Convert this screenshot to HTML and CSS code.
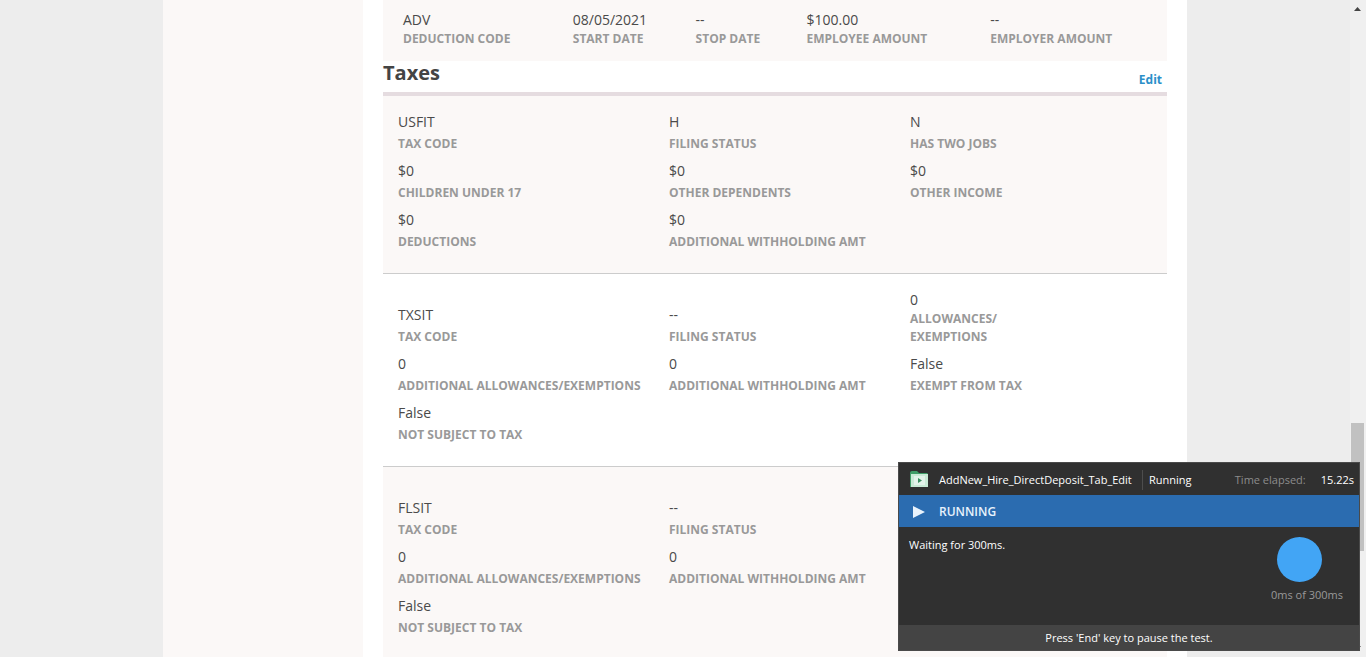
FILE: index.html
```html
<!DOCTYPE html>
<html lang="en">
<head>
<meta charset="utf-8">
<title>Employee – Taxes</title>
<link rel="stylesheet" href="styles.css">
</head>
<body>
<div class="window">
  <div class="viewport">
    <div class="page">
      <aside class="sidebar"></aside>
      <main class="main">
        <dl class="deduction">
          <div class="field"><dd>ADV</dd><dt>Deduction Code</dt></div>
          <div class="field"><dd>08/05/2021</dd><dt>Start Date</dt></div>
          <div class="field"><dd>--</dd><dt>Stop Date</dt></div>
          <div class="field"><dd>$100.00</dd><dt>Employee Amount</dt></div>
          <div class="field"><dd>--</dd><dt>Employer Amount</dt></div>
        </dl>
        <section>
          <header class="section-head">
            <h2>Taxes</h2>
            <a class="edit" href="#">Edit</a>
          </header>
          <dl class="tax shaded">
            <div class="field"><dd>USFIT</dd><dt>Tax Code</dt></div>
            <div class="field"><dd>H</dd><dt>Filing Status</dt></div>
            <div class="field"><dd>N</dd><dt>Has Two Jobs</dt></div>
            <div class="field"><dd>$0</dd><dt>Children Under 17</dt></div>
            <div class="field"><dd>$0</dd><dt>Other Dependents</dt></div>
            <div class="field"><dd>$0</dd><dt>Other Income</dt></div>
            <div class="field"><dd>$0</dd><dt>Deductions</dt></div>
            <div class="field"><dd>$0</dd><dt>Additional Withholding Amt</dt></div>
          </dl>
          <dl class="tax state-tax">
            <div class="field"><dd>TXSIT</dd><dt>Tax Code</dt></div>
            <div class="field"><dd>--</dd><dt>Filing Status</dt></div>
            <div class="field tight"><dd>0</dd><dt>Allowances/<br>Exemptions</dt></div>
            <div class="field"><dd>0</dd><dt>Additional Allowances/Exemptions</dt></div>
            <div class="field"><dd>0</dd><dt>Additional Withholding Amt</dt></div>
            <div class="field"><dd>False</dd><dt>Exempt From Tax</dt></div>
            <div class="field"><dd>False</dd><dt>Not Subject To Tax</dt></div>
          </dl>
          <dl class="tax state-tax shaded">
            <div class="field"><dd>FLSIT</dd><dt>Tax Code</dt></div>
            <div class="field"><dd>--</dd><dt>Filing Status</dt></div>
            <div class="field new-row"><dd>0</dd><dt>Additional Allowances/Exemptions</dt></div>
            <div class="field"><dd>0</dd><dt>Additional Withholding Amt</dt></div>
            <div class="field new-row"><dd>False</dd><dt>Not Subject To Tax</dt></div>
          </dl>
        </section>
      </main>
    </div>
  </div>
  <div class="scrollbar" aria-hidden="true">
    <svg class="arrow" width="7" height="4" viewBox="0 0 7 4"><path d="M3.500 0L7 4H0Z" fill="#454545"/></svg>
    <div class="track"><div class="thumb"></div></div>
    <svg class="arrow" width="7" height="4" viewBox="0 0 7 4"><path d="M3.500 4L7 0H0Z" fill="#454545"/></svg>
  </div>
</div>

<div class="runner" role="status">
  <div class="runner-title">
    <svg width="18" height="17" viewBox="0 0 18 17">
      <path d="M0 2Q0 0 2 0H7L9 2H17L18 3V16H0Z" fill="#3f9d68"/>
      <rect x="1" y="3" width="17" height="13" fill="#c9ead6"/>
      <rect x="4" y="5" width="11" height="9" fill="#e3f3ea"/>
      <path d="M8 7L12 9.500L8 12Z" fill="#3a8f60"/>
    </svg>
    <span class="test-name">AddNew_Hire_DirectDeposit_Tab_Edit</span>
    <span class="state">Running</span>
    <span class="elapsed">Time elapsed:</span>
    <span class="time">15.22s</span>
  </div>
  <div class="runner-state">
    <svg width="12" height="12" viewBox="0 0 12 12"><path d="M0 0L12 6L0 12Z" fill="#e8f2fc"/></svg>
    <span>RUNNING</span>
  </div>
  <div class="runner-body">
    <span>Waiting for 300ms.</span>
    <div class="progress">
      <div class="disc"></div>
      <span>0ms of 300ms</span>
    </div>
  </div>
  <div class="runner-foot">Press 'End' key to pause the test.</div>
</div>
</body>
</html>
```
FILE: styles.css
```css
* { box-sizing: border-box; }

body {
  margin: 0;
  overflow: hidden;
  background: #ededed;
  color: #444;
  font: 14px/18px "Open Sans", "Noto Sans", sans-serif;
}

.window {
  display: flex;
  height: 100vh;
}

.viewport {
  flex: 1;
  overflow: hidden;
}

.page {
  display: flex;
  max-width: 1024px;
  min-height: 100%;
  margin: 0 auto;
  background: #fff;
}

.sidebar {
  flex: 0 0 200px;
  background: #fbf8f7;
}

.main {
  flex: 1;
  padding: 0 20px;
}

dl, dd, h2 { margin: 0; }

.field dd { color: #4a4a4a; }

.field dt {
  color: #999;
  font-size: 12px;
  font-weight: 700;
  text-transform: uppercase;
}

.deduction {
  display: grid;
  grid-template-columns: 170fr 123fr 111fr 184fr 157fr;
  padding: 11px 20px 13px;
  background: #fbf8f7;
}

.deduction .field {
  display: grid;
  row-gap: 1px;
}

.section-head {
  display: flex;
  justify-content: space-between;
  padding: 0 5px 3px 0;
  border-bottom: 4px solid #e5dce0;
}

.section-head h2 {
  padding-bottom: 4px;
  font-size: 20px;
  line-height: 24px;
}

.edit {
  align-self: flex-end;
  color: #2c8fc9;
  font-size: 12px;
  font-weight: 700;
  text-decoration: none;
}

.tax {
  display: grid;
  grid-template-columns: 271fr 241fr 242fr;
  align-items: end;
  row-gap: 9px;
  padding: 17px 15px 22px;
  border-bottom: 1px solid #ccc;
}

.state-tax { grid-template-rows: 55px; }

.new-row { grid-column: 1; }

.shaded { background: #fbf8f7; }

.tax .field {
  display: grid;
  row-gap: 4px;
}

.tax .tight { row-gap: 1px; }

.scrollbar {
  display: flex;
  flex: 0 0 16px;
  flex-direction: column;
  align-items: center;
  justify-content: space-between;
  padding: 7px 2px 7px 1px;
  background: #f0f0f0;
}

.track {
  flex: 1;
  align-self: stretch;
  display: grid;
  grid-template-rows: 412fr 128fr 95fr;
}

.thumb {
  grid-row: 2;
  background: #c1c1c1;
}

.runner {
  position: fixed;
  right: 6px;
  bottom: 6px;
  width: 462px;
  border: 1px solid #4a4a4a;
  background: #303030;
  color: #fff;
  font-size: 11px;
  line-height: 16px;
}

.runner-title {
  display: flex;
  align-items: center;
  height: 32px;
  padding: 1px 5px 0 11px;
}

.test-name {
  min-width: 203px;
  margin-left: 11px;
}

.state {
  padding: 2px 0 2px 6px;
  border-left: 1px solid #4d4d4d;
}

.elapsed {
  margin: 0 15px 0 auto;
  color: #8c8c8c;
}

.runner-state {
  display: flex;
  align-items: center;
  gap: 14px;
  height: 32px;
  padding: 1px 0 0 14px;
  background: #2b6cb0;
  color: #e8f2fc;
  font-size: 12px;
  font-weight: 600;
}

.runner-body {
  display: flex;
  justify-content: space-between;
  min-height: 98px;
  padding: 10px 16px 10px 10px;
}

.progress {
  display: flex;
  flex-direction: column;
  gap: 5px;
  color: #999;
}

.disc {
  width: 45px;
  height: 45px;
  margin-left: 6px;
  border-radius: 50%;
  background: #42a5f5;
}

.runner-foot {
  padding: 5px 4px 4px;
  background: #444;
  text-align: center;
}
```
